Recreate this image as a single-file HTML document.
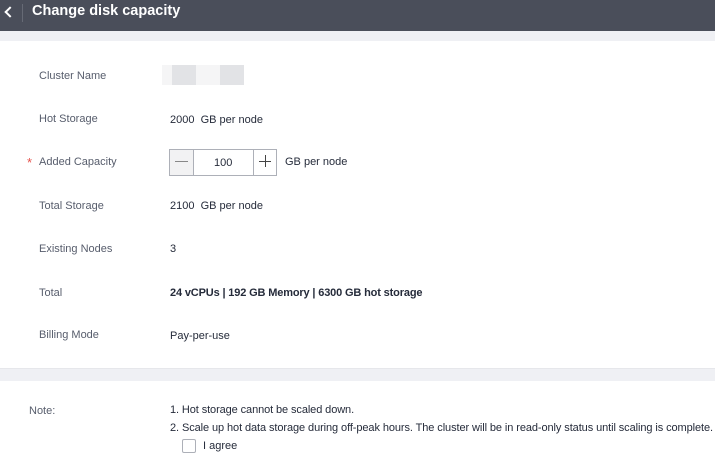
<html><head><style>
body{margin:0;width:715px;height:454px;background:#fff;font-family:"Liberation Sans",Arial,sans-serif;font-size:11px;color:#252b3a;position:relative;overflow:hidden}
.a{position:absolute;white-space:nowrap}
.l{color:#575d6c;left:39px}
</style></head><body>
<div class="a" style="left:0;top:0;width:715px;height:31px;background:#4a4e5a"></div>
<div class="a" style="border-left:2px solid #fff;border-bottom:2px solid #fff;transform:rotate(45deg);top:8px;left:6px;width:6px;height:6px"></div>
<div class="a" style="left:22px;top:4px;width:1px;height:18px;background:#666a75"></div>
<div class="a" style="left:32px;top:3px;color:#fff;font-weight:bold;font-size:14.5px">Change disk capacity</div>
<div class="a" style="left:0;top:31px;width:715px;height:10px;background:#eff0f4"></div>
<div class="a" style="left:0;top:368px;width:715px;height:12px;background:#eff0f4;border-top:1px solid #e6e7eb"></div>
<div class="a l" style="top:70px">Cluster Name</div>
<div class="a" style="left:162px;top:65px;width:82px;height:20px;background:linear-gradient(90deg,#f5f5f6 0 10px,#e2e3e6 10px 34px,#f5f5f6 34px 58px,#e2e3e6 58px)"></div>
<div class="a l" style="top:113px">Hot Storage</div>
<div class="a" style="left:170px;top:114px">2000 &nbsp;GB per node</div>
<div class="a" style="left:27px;top:155px;color:#e5514b;font-size:13px">*</div>
<div class="a l" style="top:156px">Added Capacity</div>
<div class="a" style="left:169px;top:149px;width:106px;height:25px;border:1px solid #adb0b8;background:#fff"></div>
<div class="a" style="left:170px;top:150px;width:23px;height:25px;background:#f2f2f3;border-right:1px solid #adb0b8"></div>
<div class="a" style="left:175px;top:161px;width:13px;height:1px;background:#888"></div>
<div class="a" style="left:253px;top:150px;width:1px;height:25px;background:#adb0b8"></div>
<div class="a" style="left:259px;top:161px;width:12px;height:1px;background:#444"></div>
<div class="a" style="left:265px;top:155px;width:1px;height:12px;background:#444"></div>
<div class="a" style="left:214px;top:157px">100</div>
<div class="a" style="left:285px;top:156px">GB per node</div>
<div class="a l" style="top:200px">Total Storage</div>
<div class="a" style="left:170px;top:200px">2100 &nbsp;GB per node</div>
<div class="a l" style="top:243px">Existing Nodes</div>
<div class="a" style="left:170px;top:243px">3</div>
<div class="a l" style="top:287px">Total</div>
<div class="a" style="left:170px;top:287px;font-weight:bold;letter-spacing:-0.15px">24 vCPUs | 192 GB Memory | 6300 GB hot storage</div>
<div class="a l" style="top:329px">Billing Mode</div>
<div class="a" style="left:170px;top:330px">Pay-per-use</div>
<div class="a" style="left:29px;top:405px;color:#575d6c;font-size:11px">Note:</div>
<div class="a" style="left:170px;top:404px;font-size:11px;letter-spacing:-0.1px">1. Hot storage cannot be scaled down.</div>
<div class="a" style="left:170px;top:422px;font-size:11px;letter-spacing:-0.09px">2. Scale up hot data storage during off-peak hours. The cluster will be in read-only status until scaling is complete.</div>
<div class="a" style="left:182px;top:439px;width:12px;height:12px;border:1px solid #adb0b8;border-radius:2px"></div>
<div class="a" style="left:203px;top:440px;font-size:11px">I agree</div>
</body></html>
